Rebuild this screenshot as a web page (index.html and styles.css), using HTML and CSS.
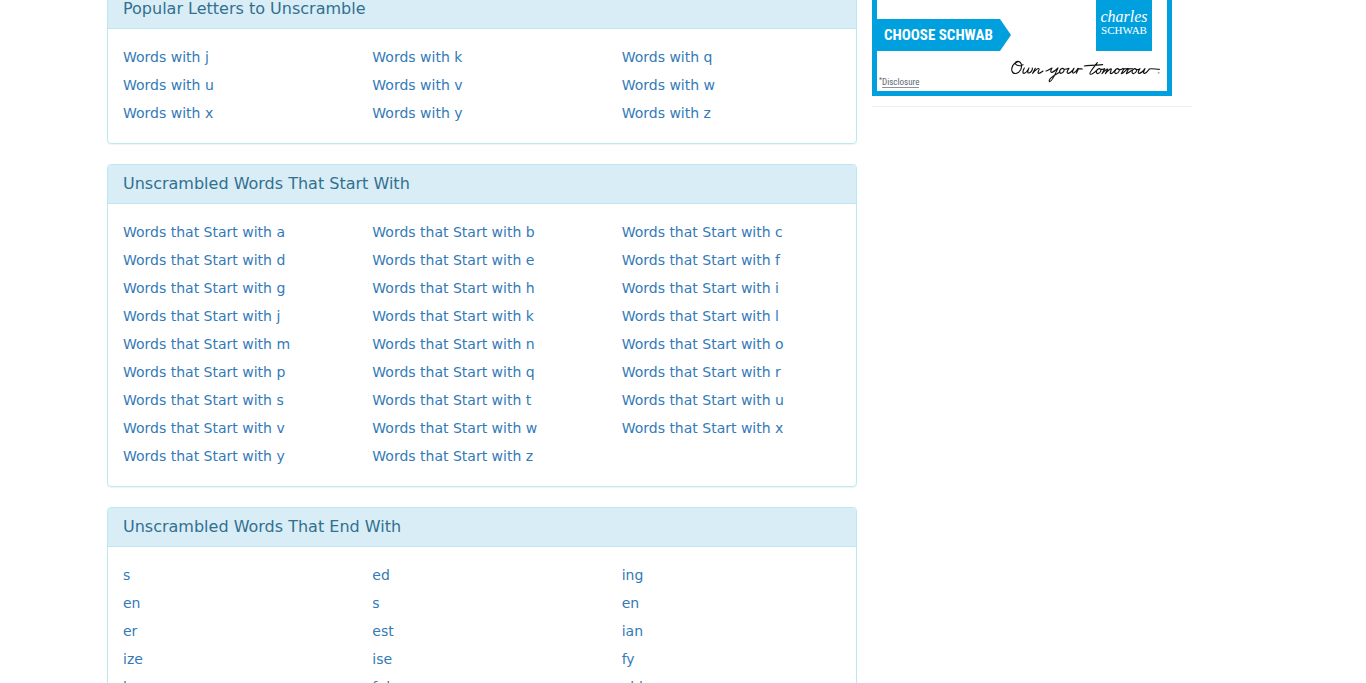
FILE: index.html
```html
<!DOCTYPE html>
<html lang="en">
<head>
<meta charset="utf-8">
<title>Unscramble Words</title>
<link rel="stylesheet" href="styles.css">
</head>
<body>
<div class="page">
  <main class="content">
    <section class="panel">
      <h3 class="panel-title">Popular Letters to Unscramble</h3>
      <ul class="links">
        <li><a href="#">Words with j</a></li><li><a href="#">Words with k</a></li><li><a href="#">Words with q</a></li>
        <li><a href="#">Words with u</a></li><li><a href="#">Words with v</a></li><li><a href="#">Words with w</a></li>
        <li><a href="#">Words with x</a></li><li><a href="#">Words with y</a></li><li><a href="#">Words with z</a></li>
      </ul>
    </section>
    <section class="panel">
      <h3 class="panel-title">Unscrambled Words That Start With</h3>
      <ul class="links">
        <li><a href="#">Words that Start with a</a></li><li><a href="#">Words that Start with b</a></li><li><a href="#">Words that Start with c</a></li>
        <li><a href="#">Words that Start with d</a></li><li><a href="#">Words that Start with e</a></li><li><a href="#">Words that Start with f</a></li>
        <li><a href="#">Words that Start with g</a></li><li><a href="#">Words that Start with h</a></li><li><a href="#">Words that Start with i</a></li>
        <li><a href="#">Words that Start with j</a></li><li><a href="#">Words that Start with k</a></li><li><a href="#">Words that Start with l</a></li>
        <li><a href="#">Words that Start with m</a></li><li><a href="#">Words that Start with n</a></li><li><a href="#">Words that Start with o</a></li>
        <li><a href="#">Words that Start with p</a></li><li><a href="#">Words that Start with q</a></li><li><a href="#">Words that Start with r</a></li>
        <li><a href="#">Words that Start with s</a></li><li><a href="#">Words that Start with t</a></li><li><a href="#">Words that Start with u</a></li>
        <li><a href="#">Words that Start with v</a></li><li><a href="#">Words that Start with w</a></li><li><a href="#">Words that Start with x</a></li>
        <li><a href="#">Words that Start with y</a></li><li><a href="#">Words that Start with z</a></li>
      </ul>
    </section>
    <section class="panel">
      <h3 class="panel-title">Unscrambled Words That End With</h3>
      <ul class="links">
        <li><a href="#">s</a></li><li><a href="#">ed</a></li><li><a href="#">ing</a></li>
        <li><a href="#">en</a></li><li><a href="#">s</a></li><li><a href="#">en</a></li>
        <li><a href="#">er</a></li><li><a href="#">est</a></li><li><a href="#">ian</a></li>
        <li><a href="#">ize</a></li><li><a href="#">ise</a></li><li><a href="#">fy</a></li>
        <li><a href="#">ly</a></li><li><a href="#">ful</a></li><li><a href="#">able</a></li>
      </ul>
    </section>
  </main>
  <aside class="sidebar">
    <div class="ad">
      <div class="ad-top">
        <a class="ad-button" href="#">CHOOSE SCHWAB</a>
        <div class="ad-logo"><span class="logo-first">charles</span><span class="logo-last">SCHWAB</span></div>
      </div>
      <div class="ad-bottom">
        <a class="ad-note" href="#"><sup>*</sup><span>Disclosure</span></a>
        <svg class="ad-script" viewBox="30 174 456 78" width="152" height="26" role="img" aria-label="Own your tomorrow">
          <g fill="none" stroke="#111" stroke-width="3.4" stroke-linecap="round" stroke-linejoin="round">
            <path d="M52 186C40 189 33 203 36 213C40 225 55 222 62 209C68 196 63 184 53 184C45 184 44 192 50 195C56 198 64 197 69 194"/>
            <path d="M73 204C68 213 67 220 72 220C78 220 83 211 87 204C82 214 82 220 87 219C94 217 98 209 97 204M106 205L98 220C105 212 113 204 117 206C120 208 110 220 116 220C121 220 125 216 129 213"/>
            <path d="M138 213C145 211 152 205 156 204C151 212 151 218 156 217C163 215 170 208 174 204C168 216 157 245 149 245C143 241 156 229 180 216"/>
            <path d="M187 205C179 207 175 219 182 220C191 220 197 206 188 205C190 210 201 207 207 205C201 213 199 220 205 220C211 219 218 211 222 205C217 214 216 220 221 219C228 217 231 210 234 205C237 208 244 206 247 207M235 207L229 220"/>
            <path d="M292 188C285 198 266 218 270 222C275 225 284 217 289 212M253 198C264 194 277 198 308 194"/>
            <path d="M297 206C289 208 286 220 293 221C302 220 307 207 298 206C302 211 310 207 314 206L306 221C313 213 320 205 323 207L316 221C323 213 331 205 334 207C335 210 327 221 333 221C338 220 342 214 346 210"/>
            <path d="M352 206C344 208 341 220 348 221C357 220 362 207 353 206C357 211 365 209 369 205C372 208 378 206 382 206M371 208L364 221C371 219 379 210 384 205C387 208 393 206 397 206M385 208L379 221C386 219 391 214 395 211"/>
            <path d="M404 206C396 208 393 220 400 221C409 220 414 207 405 206C409 211 415 209 420 206C414 214 413 221 418 220C425 219 431 212 435 206C430 215 429 221 434 220C441 218 446 209 448 207C455 205 463 207 478 208"/>
          </g>
          <circle cx="476" cy="218" r="3" fill="#aaa"/>
        </svg>
      </div>
    </div>
    <hr class="divider">
  </aside>
</div>
</body>
</html>
```
FILE: styles.css
```css
* { box-sizing: border-box; }
html { height: 100%; overflow: hidden; }
body {
  height: 100%;
  margin: 0;
  overflow: hidden;
  background: #fff;
  color: #333;
  font-family: "DejaVu Sans", sans-serif;
  font-size: 14px;
  line-height: 20px;
}
a { color: #337ab7; text-decoration: none; }
/* The page is shown scrolled part of the way down. */
.page {
  display: grid;
  grid-template-columns: minmax(0, 1fr) 320px;
  column-gap: 15px;
  align-items: start;
  margin-top: -11px;
  padding: 0 174px 0 107px;
}
.panel {
  margin-bottom: 20px;
  border: 1px solid #bce8f1;
  border-radius: 4px;
  box-shadow: 0 1px 1px rgba(0, 0, 0, .05);
}
.panel-title {
  margin: 0;
  padding: 10px 15px;
  border-bottom: 1px solid #bce8f1;
  border-radius: 3px 3px 0 0;
  background: #d9edf7;
  color: #31708f;
  font-size: 16px;
  font-weight: 400;
  line-height: 18px;
}
.links {
  display: grid;
  grid-template-columns: repeat(3, 1fr);
  margin: 0;
  padding: 14px 0 16px;
  list-style: none;
}
.links li { padding: 4px 15px; }
.ad {
  display: flex;
  flex-direction: column;
  width: 300px;
  border: 5px solid #00a0df;
  border-top: 0;
  color: #fff;
}
.ad-top { display: flex; justify-content: space-between; padding-right: 15px; }
.ad-button {
  width: 134px;
  height: 32px;
  margin-top: 30px;
  padding-left: 7px;
  background: #00a0df;
  clip-path: polygon(0 0, 123px 0, 100% 50%, 123px 100%, 0 100%);
  color: #fff;
  font: 700 15px/32px "Liberation Sans Narrow", "Roboto Condensed", Roboto, sans-serif;
  white-space: nowrap;
}
.ad-logo {
  display: flex;
  flex-direction: column;
  align-items: center;
  width: 56px;
  height: 62px;
  padding-top: 20px;
  background: #00a0df;
  font-family: "Liberation Serif", serif;
}
.logo-first { font-size: 16px; font-style: italic; line-height: 16px; }
.logo-last { font-size: 11px; line-height: 10px; }
.ad-bottom { display: flex; justify-content: space-between; align-items: flex-end; height: 40px; padding: 0 5px 3px 2px; }
.ad-note {
  display: flex;
  color: #5b6770;
  font: 9px/10px "Roboto Condensed", Roboto, sans-serif;
}
.ad-note sup { font-size: 7px; line-height: 7px; }
.ad-note span { border-bottom: 1px solid #8b949b; }
.ad-script { margin-bottom: 4px; }
.divider { margin: 10px 0 0; border: 0; border-top: 1px solid #eee; }
```
